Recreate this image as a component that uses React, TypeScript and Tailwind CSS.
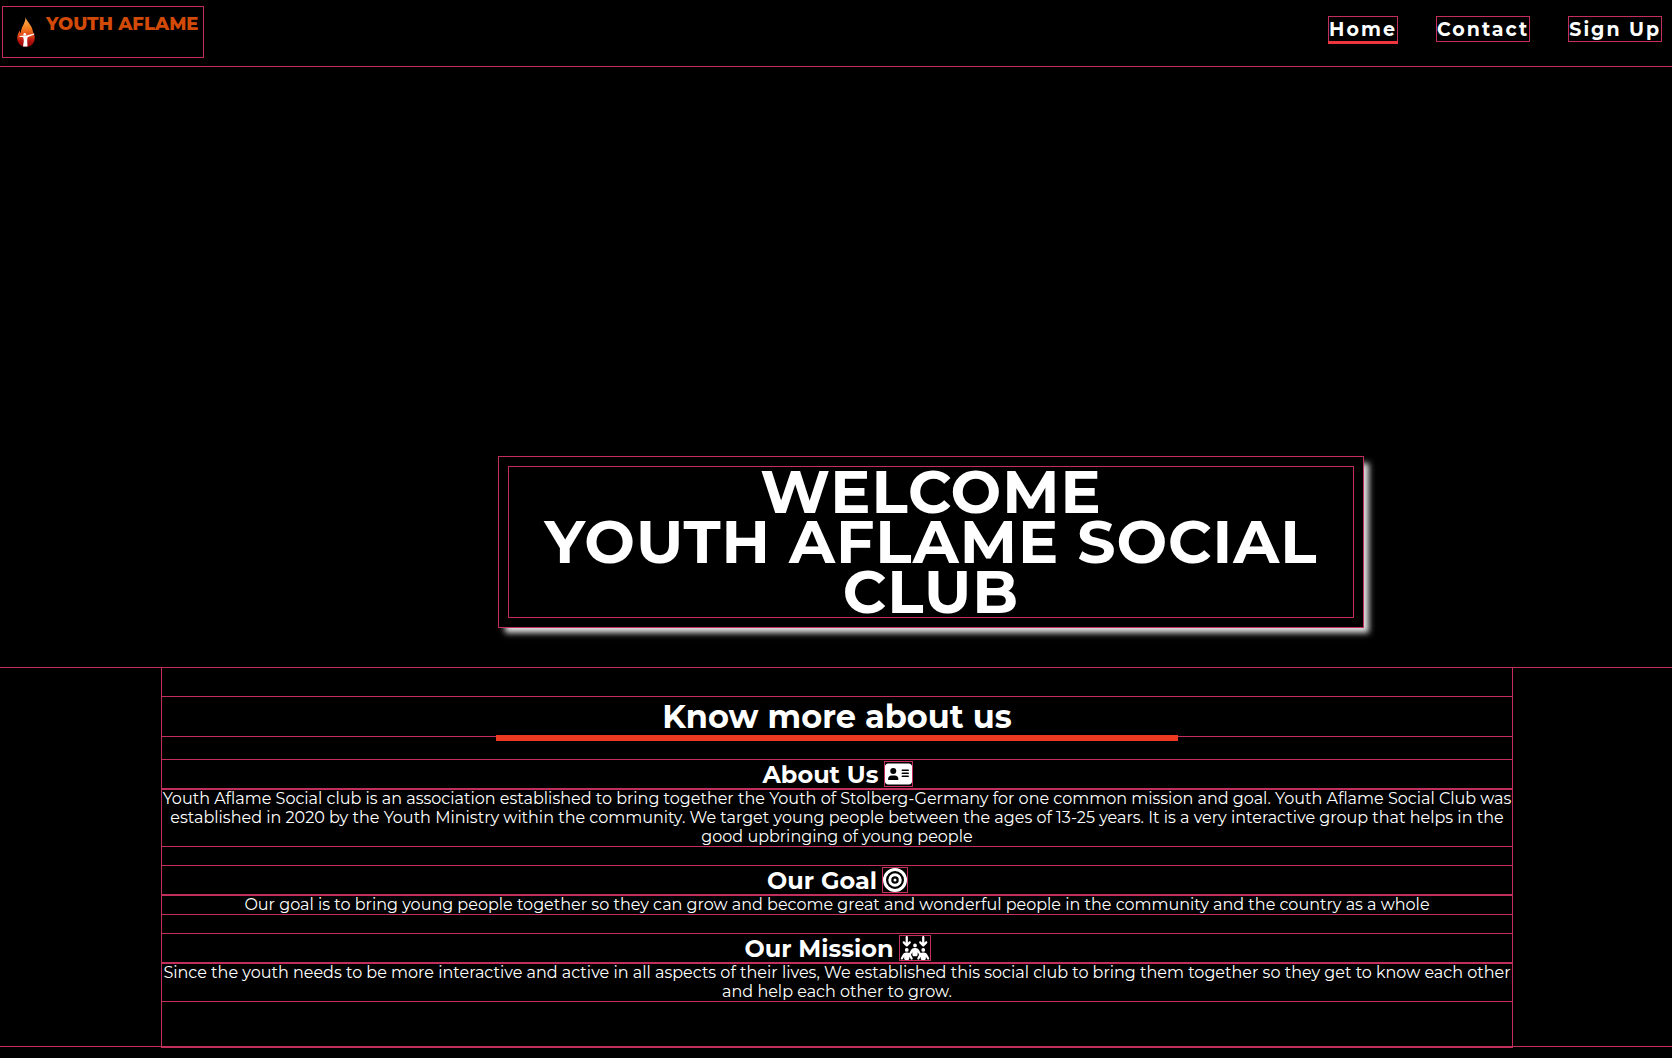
import type { ReactNode } from "react";
import { FaAddressCard, FaArrowsDownToPeople, FaBullseye } from "react-icons/fa6";

const line = "outline outline-1 outline-[#c22f5c]";

function FlameLogo() {
  return (
    <svg viewBox="0 0 18 30" className="h-[30px] w-[18px] shrink-0" aria-hidden="true">
      <defs>
        <linearGradient id="flame" x1="0" y1="0" x2="0" y2="1">
          <stop offset="0" stopColor="#ffb45a" />
          <stop offset="0.35" stopColor="#f58220" />
          <stop offset="0.62" stopColor="#e0471a" />
          <stop offset="0.8" stopColor="#b3120c" />
          <stop offset="1" stopColor="#8f0808" />
        </linearGradient>
      </defs>
      <path
        d="M8.5 0C9 4 15 8 15.800 14C16 15.500 17.600 17 17.800 20.500C18 26 14 30 9 30C4 30 .2 26 .2 21C.2 18 1.500 16.500 2.500 13.500C3 15 3.400 15.700 4 16C3.500 10.500 8.800 6 8.500 0Z"
        fill="url(#flame)"
      />
      <circle cx="7.800" cy="17.300" r="1.300" fill="#fff" />
      <path
        d="M2.500 19L6.500 18.600H9.500L17.200 16.600V17.500L10.500 20.300L10.200 24L10.500 29.500H6L6.800 24L6.300 20.200L2.500 19.800Z"
        fill="#fff"
      />
    </svg>
  );
}

function NavLink({ href, active, children }: { href: string; active?: boolean; children: ReactNode }) {
  return (
    <a
      href={href}
      aria-current={active ? "page" : undefined}
      className={`relative h-6 text-[19px] leading-[25px] font-bold tracking-[2px] ${line}`}
    >
      {children}
      {active && <span className="absolute -inset-x-px top-full h-[3px] bg-[#ee3540]" />}
    </a>
  );
}

function Topic({ title, icon, children }: { title: string; icon: ReactNode; children: ReactNode }) {
  return (
    <section className="mb-5">
      <h3 className={`flex h-[29px] items-start justify-center gap-1.5 text-2xl leading-[29px] font-bold ${line}`}>
        {title}
        <span className={`mt-[2px] block ${line}`}>{icon}</span>
      </h3>
      <p className={`text-base leading-[19px] ${line}`}>{children}</p>
    </section>
  );
}

export default function App() {
  return (
    <div className="min-h-screen overflow-x-hidden bg-black font-['Montserrat','Inter',sans-serif] text-white">
      <header className={`flex h-[66px] items-start justify-between pt-[7px] pr-[11px] pl-[3px] ${line}`}>
        <a href="#home" className={`flex h-[50px] w-[200px] items-start pt-[10px] pl-[14px] ${line}`}>
          <FlameLogo />
          <span className="ml-[11px] text-lg leading-[15px] font-extrabold whitespace-nowrap text-[#d24a08]">YOUTH AFLAME</span>
        </a>
        <nav className="mt-[10px] flex gap-10">
          <NavLink href="#home" active>Home</NavLink>
          <NavLink href="#contact">Contact</NavLink>
          <NavLink href="#signup">Sign Up</NavLink>
        </nav>
      </header>

      <div className="mt-px flex h-[600px] items-end pr-[309px] pb-10 pl-[499px]">
        <div className={`flex-1 bg-black p-[10px] shadow-[6px_6px_6px_#e0e0e0] ${line}`}>
          <h1 className={`text-center text-[60px] leading-[50px] font-bold tracking-[1px] ${line}`}>
            WELCOME
            <br />
            YOUTH AFLAME SOCIAL CLUB
          </h1>
        </div>
      </div>

      <main className={`mt-px h-[378px] pr-[160px] pl-[162px] text-center ${line}`}>
        <div className={`h-[379px] pt-[29px] ${line}`}>
          <h2 className={`relative mb-6 text-[32px] leading-[39px] font-bold ${line}`}>
            Know more about us
            <span className="absolute inset-x-[334px] -bottom-[5px] h-[6px] bg-[#ee3a20]" />
          </h2>
          <Topic title="About Us" icon={<FaAddressCard className="h-6 w-[27px]" />}>
            Youth Aflame Social club is an association established to bring together the Youth of Stolberg-Germany for one common mission and goal. Youth Aflame Social Club was established in 2020 by the Youth Ministry within the community. We target young people between the ages of 13-25 years. It is a very interactive group that helps in the good upbringing of young people
          </Topic>
          <Topic title="Our Goal" icon={<FaBullseye className="size-6" />}>
            Our goal is to bring young people together so they can grow and become great and wonderful people in the community and the country as a whole
          </Topic>
          <Topic title="Our Mission" icon={<FaArrowsDownToPeople className="h-6 w-[30px]" />}>
            Since the youth needs to be more interactive and active in all aspects of their lives, We established this social club to bring them together so they get to know each other and help each other to grow.
          </Topic>
        </div>
      </main>
    </div>
  );
}
